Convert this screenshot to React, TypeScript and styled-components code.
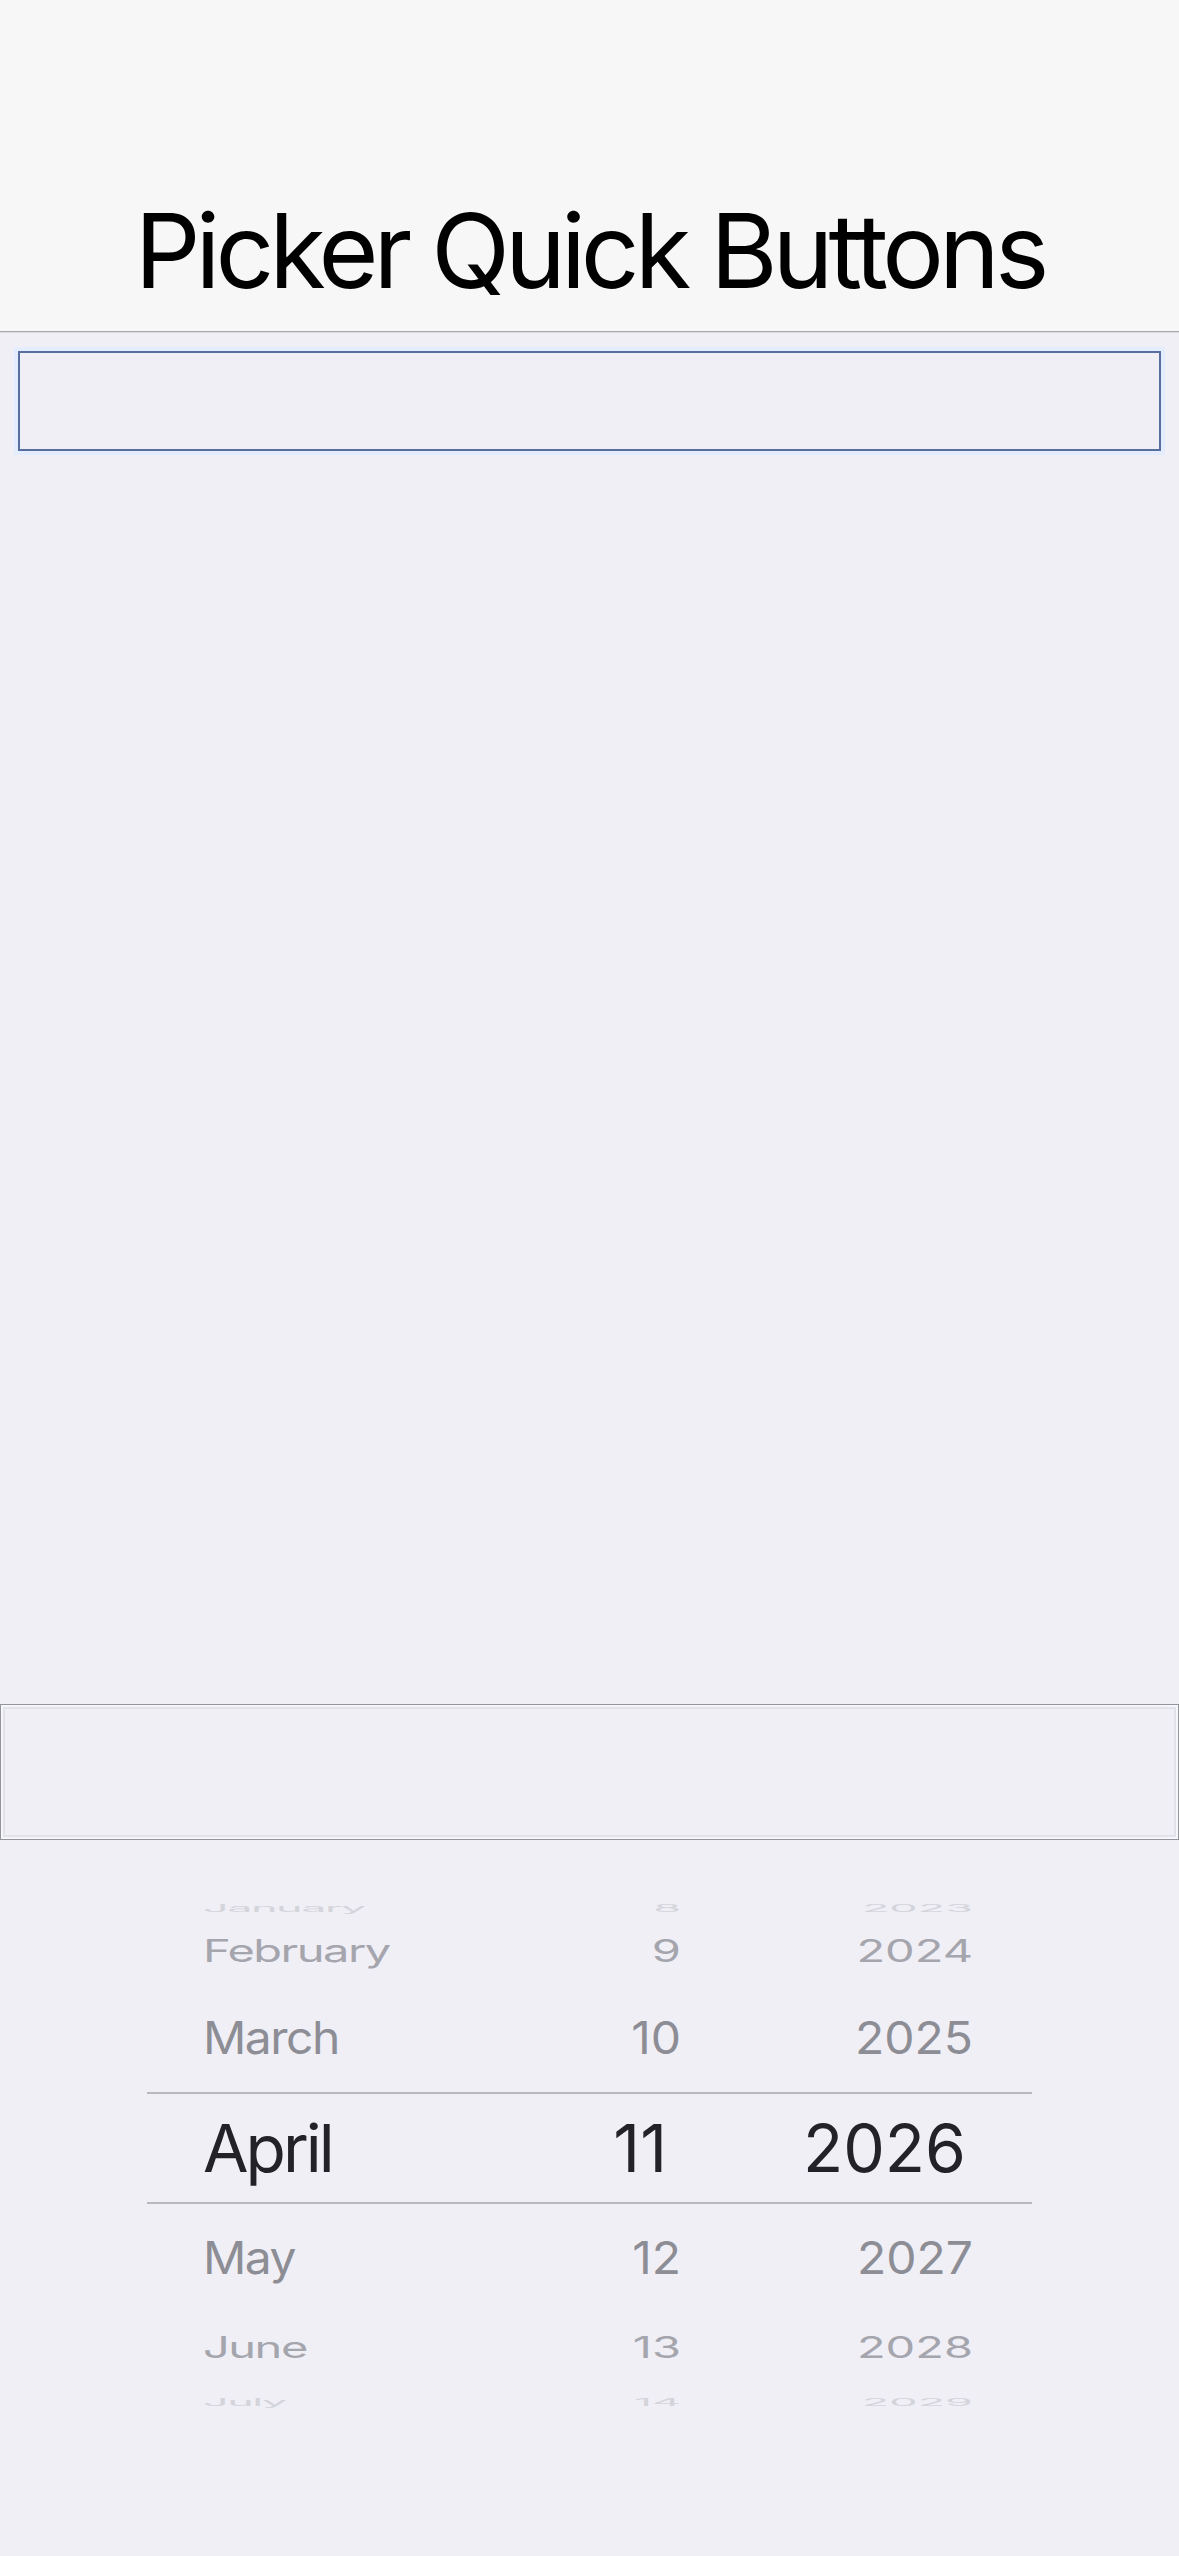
import React from 'react';
import styled, { createGlobalStyle } from 'styled-components';

interface WheelRow {
  month: string;
  day: number;
  year: number;
  height: number;
  scale: number;
  size: number;
  color: string;
  selected?: boolean;
}

const rows: WheelRow[] = [
  { month: 'January', day: 8, year: 2023, height: 30, scale: 0.23, size: 45, color: '#d4d4db' },
  { month: 'February', day: 9, year: 2024, height: 68, scale: 0.66, size: 47, color: '#a5a5ad' },
  { month: 'March', day: 10, year: 2025, height: 108, scale: 0.94, size: 48, color: '#8d8d95' },
  { month: 'April', day: 11, year: 2026, height: 112, scale: 1, size: 66, color: '#222228', selected: true },
  { month: 'May', day: 12, year: 2027, height: 108, scale: 0.94, size: 48, color: '#8d8d95' },
  { month: 'June', day: 13, year: 2028, height: 68, scale: 0.63, size: 47, color: '#a5a5ad' },
  { month: 'July', day: 14, year: 2029, height: 30, scale: 0.23, size: 45, color: '#d4d4db' },
];

const App: React.FC = () => {
  return (
    <>
      <GlobalStyle />
      <Screen>
        <Header>
          <Title>Picker Quick Buttons</Title>
        </Header>

        <FieldArea>
          <FocusField />
        </FieldArea>

        <Spacer />

        <ButtonBar />

        <Wheel>
          {rows.map((row) => (
            <Row key={row.month} $height={row.height} $selected={!!row.selected}>
              <Cell
                $scale={row.scale}
                $size={row.size}
                $color={row.color}
                $tracking={row.selected ? -3 : -1.5}
              >
                {row.month}
              </Cell>
              <Cell
                $scale={row.scale}
                $size={row.size}
                $color={row.color}
                $right
                $inset={row.selected ? 14 : 0}
              >
                {row.day}
              </Cell>
              <Cell
                $scale={row.scale}
                $size={row.size}
                $color={row.color}
                $right
                $inset={row.selected ? 7 : 0}
              >
                {row.year}
              </Cell>
            </Row>
          ))}
        </Wheel>
      </Screen>
    </>
  );
};

export default App;

// Styled Components
const GlobalStyle = createGlobalStyle`
  html, body {
    margin: 0;
    padding: 0;
    background: #f0eff6;
  }

  body {
    font-family: Inter, 'Noto Sans', 'Liberation Sans', sans-serif;
  }
`;

const Screen = styled.div`
  width: 1179px;
  min-height: 2556px;
  background: #f0eff6;
  display: flex;
  flex-direction: column;
`;

const Header = styled.header`
  height: 332px;
  box-sizing: border-box;
  background: #f7f7f7;
  border-bottom: 1px solid #a8a8aa;
  box-shadow: 0 1px 0 #dcdcdf;
  display: flex;
  align-items: flex-end;
  justify-content: center;
  padding-bottom: 29px;
`;

const Title = styled.h1`
  margin: 0;
  font-size: 103px;
  line-height: 1;
  font-weight: 400;
  letter-spacing: -5px;
  color: #000000;
`;

const FieldArea = styled.div`
  padding: 19px 18px 0;
`;

const FocusField = styled.div`
  height: 100px;
  box-sizing: border-box;
  border: 2px solid #566f9e;
  box-shadow: 0 0 0 4px #e3edff;
  background: #f0eff6;
`;

const Spacer = styled.div`
  height: 1253px;
`;

const ButtonBar = styled.div`
  height: 136px;
  box-sizing: border-box;
  border: 1px solid #95959c;
  box-shadow: inset 0 0 0 2px #f6f6fa, inset 0 0 0 4px #e2e2ea;
`;

const Wheel = styled.div`
  margin: 46px 147px 0;
  display: flex;
  flex-direction: column;
`;

const Row = styled.div<{ $height: number; $selected: boolean }>`
  height: ${(p) => p.$height}px;
  box-sizing: border-box;
  display: grid;
  grid-template-columns: 1fr 121px 292px;
  align-items: center;
  padding: 0 59px 0 56px;
  border-top: ${(p) => (p.$selected ? '2px solid #b8b8be' : 'none')};
  border-bottom: ${(p) => (p.$selected ? '2px solid #b8b8be' : 'none')};
`;

const Cell = styled.span<{
  $scale: number;
  $size: number;
  $color: string;
  $right?: boolean;
  $inset?: number;
  $tracking?: number;
}>`
  display: block;
  font-size: ${(p) => p.$size}px;
  line-height: 1;
  font-weight: 400;
  letter-spacing: ${(p) => p.$tracking ?? 0}px;
  color: ${(p) => p.$color};
  text-align: ${(p) => (p.$right ? 'right' : 'left')};
  padding-right: ${(p) => p.$inset ?? 0}px;
  transform: scaleY(${(p) => p.$scale});
  white-space: nowrap;
`;
